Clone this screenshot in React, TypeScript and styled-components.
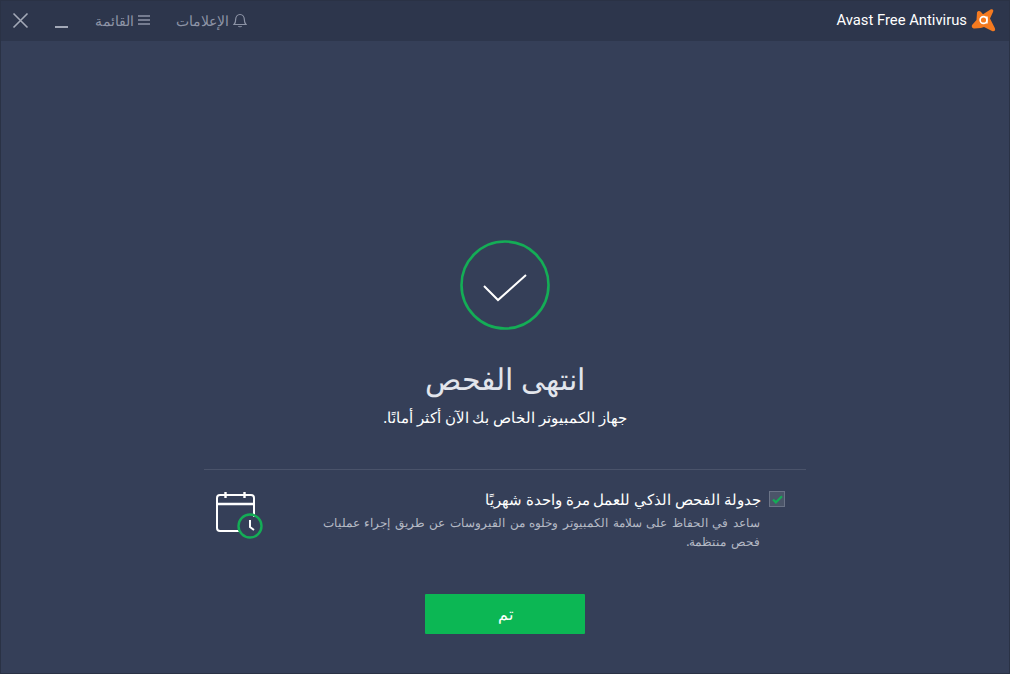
import React from "react";
import styled, { createGlobalStyle } from "styled-components";

const Global = createGlobalStyle`
  html, body { margin: 0; padding: 0; background: #353f58; }
  * { box-sizing: border-box; }
`;

const Window = styled.div`
  width: 1010px;
  height: 674px;
  background: #353f58;
  border: 1px solid #2a3245;
  font-family: "Noto Sans", "Liberation Sans", sans-serif;
  color: #fff;
  display: flex;
  flex-direction: column;
  overflow: hidden;
`;

const TitleBar = styled.div`
  height: 40px;
  flex: none;
  background: #2d364c;
  display: flex;
  align-items: center;
  justify-content: space-between;
  padding: 0 12px 2px 11px;
`;

const Controls = styled.div`
  display: flex;
  align-items: center;
`;

const IconButton = styled.div<{ $w: number }>`
  width: ${(p) => p.$w}px;
  display: flex;
  align-items: center;
`;

const NavItem = styled.div<{ $w: number }>`
  width: ${(p) => p.$w}px;
  display: flex;
  align-items: center;
  gap: 4px;
  color: #8d94a6;
  font-size: 14px;
  direction: ltr;
`;

const Brand = styled.div`
  display: flex;
  align-items: center;
  gap: 4px;
  font-family: "Roboto", "Liberation Sans", sans-serif;
  font-size: 14.8px;
  font-weight: 400;
`;

const Main = styled.div`
  flex: 1;
  display: flex;
  flex-direction: column;
  align-items: center;
  padding-top: 199px;
`;

const Heading = styled.h1`
  margin: 23px 0 0;
  font-size: 30px;
  font-weight: 200;
  line-height: 52px;
  color: #e2e5ec;
`;

const Sub = styled.p`
  margin: 0;
  font-size: 14.6px;
  line-height: 24px;
`;

const Divider = styled.div`
  width: 602px;
  height: 1px;
  background: #4a536a;
  margin-top: 40px;
`;

const Schedule = styled.div`
  width: 602px;
  margin-top: 17px;
  display: flex;
  justify-content: space-between;
  align-items: flex-start;
  padding: 0 46px 0 12px;
`;

const CalendarIcon = styled.svg`
  margin-top: 5px;
`;

const ScheduleText = styled.div`
  width: 445px;
  direction: rtl;
`;

const CheckRow = styled.div`
  display: flex;
  align-items: center;
  gap: 8px;
  font-size: 14.8px;
  line-height: 24px;
  margin-right: -25px;
`;

const CheckBox = styled.div`
  width: 16px;
  height: 16px;
  background: #4b5569;
  border: 1px solid #6a7386;
  display: flex;
  align-items: center;
  justify-content: center;
`;

const Description = styled.p`
  margin: 2px 0 0;
  font-size: 12px;
  word-spacing: 1.5px;
  line-height: 19px;
  color: #b4b9c5;
`;

const DoneButton = styled.button`
  width: 160px;
  height: 40px;
  margin-top: 43px;
  border: 0;
  border-radius: 1px;
  background: #0cb754;
  color: #fff;
  font-family: inherit;
  font-size: 16px;
  font-weight: 400;
`;

export default function App() {
  return (
    <Window>
      <Global />
      <TitleBar>
        <Controls>
          <IconButton $w={43}>
            <svg width="17" height="17" viewBox="0 0 17 17" fill="none" stroke="#a3a9b7" strokeWidth="1.6">
              <path d="M1.5 1.5 15.5 15.5M15.5 1.5 1.5 15.5" />
            </svg>
          </IconButton>
          <IconButton $w={40}>
            <svg width="13" height="16" viewBox="0 0 13 16" fill="none" stroke="#a3a9b7" strokeWidth="2">
              <path d="M0 15h13" />
            </svg>
          </IconButton>
          <NavItem $w={81}>
            <span dir="rtl">القائمة</span>
            <svg width="12" height="10" viewBox="0 0 12 10" fill="none" stroke="#8d94a6" strokeWidth="1.7">
              <path d="M0 1h12M0 5h12M0 9h12" />
            </svg>
          </NavItem>
          <NavItem $w={90}>
            <span dir="rtl">الإعلامات</span>
            <svg width="14" height="15" viewBox="0 0 14 15" fill="none" stroke="#8d94a6" strokeWidth="1.2">
              <path d="M1 11.5c1.2-1.2 1.6-2.4 1.6-4.5 0-3 1.8-5.5 4.4-5.5s4.4 2.5 4.4 5.5c0 2.1.4 3.3 1.6 4.5z" />
              <path d="M5.4 13.2c.4.7 2.8.7 3.2 0" />
            </svg>
          </NavItem>
        </Controls>
        <Brand>
          <span>Avast Free Antivirus</span>
          <svg width="26" height="26" viewBox="0 0 26 26">
            <path
              fill="#f47a20"
              d="M6 5.5C6.5 3.5 9 3.5 10 5l2 2.2 7.5-4.7c2-1 3.5.5 2.5 2.5l-3 6.5 4.8 9.5c1.2 2.5-.8 4-2.8 3l-8-4-3 1-6.5 0.5C1 21.5 0 19 1.5 17.5l4-4.5z"
            />
            <circle cx="12.5" cy="13" r="3.4" fill="none" stroke="#fff" strokeWidth="1.6" />
            <path d="M15.9 9.4V16.6" stroke="#fff" strokeWidth="1.6" />
          </svg>
        </Brand>
      </TitleBar>
      <Main>
        <svg width="90" height="90" viewBox="0 0 90 90" fill="none">
          <circle cx="45" cy="45" r="43.5" stroke="#14ad56" strokeWidth="2.6" />
          <path d="M24 46 38 60 66 35" stroke="#fff" strokeWidth="2" />
        </svg>
        <Heading dir="rtl">انتهى الفحص</Heading>
        <Sub dir="rtl">جهاز الكمبيوتر الخاص بك الآن أكثر أمانًا.</Sub>
        <Divider />
        <Schedule>
          <CalendarIcon width="48" height="48" viewBox="0 0 48 48" fill="none">
            <path d="M24 39H4a3 3 0 0 1-3-3V6a3 3 0 0 1 3-3h31a3 3 0 0 1 3 3v19" stroke="#fff" strokeWidth="2" />
            <path d="M1 12h37" stroke="#fff" strokeWidth="2.4" />
            <path d="M9.5 0v6M28.5 0v6" stroke="#fff" strokeWidth="2.4" />
            <circle cx="34" cy="34" r="11.5" stroke="#14ad56" strokeWidth="2.4" />
            <path d="M34 28v7l4 3" stroke="#fff" strokeWidth="2" />
          </CalendarIcon>
          <ScheduleText>
            <CheckRow>
              <CheckBox>
                <svg width="11" height="9" viewBox="0 0 12 10" fill="none" stroke="#14ad56" strokeWidth="2.4">
                  <path d="M1 5l3.2 3.2L11 1.5" />
                </svg>
              </CheckBox>
              <span>جدولة الفحص الذكي للعمل مرة واحدة شهريًا</span>
            </CheckRow>
            <Description>
              ساعد في الحفاظ على سلامة الكمبيوتر وخلوه من الفيروسات عن طريق إجراء عمليات فحص منتظمة.
            </Description>
          </ScheduleText>
        </Schedule>
        <DoneButton dir="rtl">تم</DoneButton>
      </Main>
    </Window>
  );
}
